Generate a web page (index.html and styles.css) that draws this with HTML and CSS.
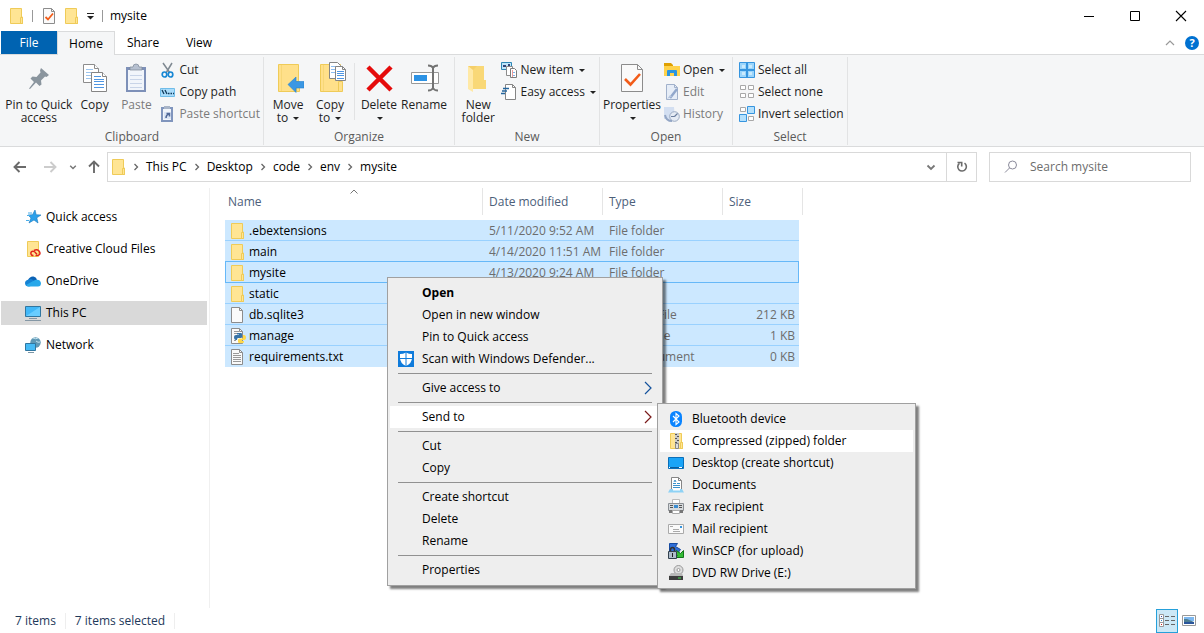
FILE: index.html
```html
<!DOCTYPE html>
<html lang="en">
<head>
  <meta charset="UTF-8">
  <title>mysite</title>
  <link rel="stylesheet" href="styles.css">
</head>
<body>

  <!-- shared icons -->
  <svg class="sprite" aria-hidden="true">
    <symbol id="folder" viewBox="0 0 16 16">
      <path d="M1.5.5h11v8.500h1v6.500h-12z" fill="#ffe594" stroke="#efcb58"/>
      <path d="M11.500 9.500h2v6h-2z" fill="#ffe594" stroke="#efcb58"/>
    </symbol>
    <symbol id="page" viewBox="0 0 16 16">
      <path d="M1.500.5h8l3 3v12h-11z" fill="#fafafa" stroke="#8c8c8c"/>
      <path d="M9.500.5v3h3" fill="none" stroke="#8c8c8c"/>
    </symbol>
    <symbol id="check-page" viewBox="0 0 16 16">
      <path d="M2.500.5h8l3 3v12h-11z" fill="#fafafa" stroke="#8c8c8c"/>
      <path d="M10.500.5v3h3" fill="none" stroke="#8c8c8c"/>
      <path d="M4.500 9l2.500 2.500 5-6" fill="none" stroke="#f25c19" stroke-width="1.800"/>
    </symbol>
    <symbol id="chev-right" viewBox="0 0 8 8">
      <path d="M2.500 1L5.500 4 2.500 7" fill="none" stroke="#666" stroke-width="1.300"/>
    </symbol>
    <symbol id="chev-down" viewBox="0 0 10 10">
      <path d="M1.500 3.500L5 7l3.500-3.500" fill="none" stroke="#777" stroke-width="1.800"/>
    </symbol>
    <symbol id="arrow" viewBox="0 0 16 16">
      <path d="M14 8H3M7.500 3L2.500 8l5 5" fill="none" stroke="currentColor" stroke-width="1.900"/>
    </symbol>
    <symbol id="submenu" viewBox="0 0 8 14">
      <path d="M1 1l6 6-6 6" fill="none" stroke="currentColor" stroke-width="1.200"/>
    </symbol>
  </svg>

  <header class="titlebar">
    <div class="quick-bar">
      <svg class="icon"><use href="#folder"/></svg>
      <span class="divider"></span>
      <button type="button" aria-label="Properties"><svg class="icon"><use href="#check-page"/></svg></button>
      <button type="button" aria-label="New folder"><svg class="icon"><use href="#folder"/></svg></button>
      <button type="button" aria-label="Customize toolbar"><svg width="8" height="8" viewBox="0 0 8 8"><path d="M0 1.500h7" stroke="#222"/><path d="M0 4h7L3.500 7.500z" fill="#222"/></svg></button>
      <span class="divider"></span>
      <h1>mysite</h1>
    </div>
    <div class="window-buttons">
      <button type="button" aria-label="Minimize"><svg width="12" height="12" viewBox="0 0 12 12"><path d="M1 6.500h10" stroke="#000"/></svg></button>
      <button type="button" aria-label="Maximize"><svg width="12" height="12" viewBox="0 0 12 12"><path d="M1.500 1.500h9v9h-9z" fill="none" stroke="#000"/></svg></button>
      <button type="button" aria-label="Close"><svg width="12" height="12" viewBox="0 0 12 12"><path d="M1 1l10 10M11 1L1 11" stroke="#000" stroke-width="1.100"/></svg></button>
    </div>
  </header>

  <nav class="tabs">
    <button type="button" class="tab file">File</button>
    <button type="button" class="tab active">Home</button>
    <button type="button" class="tab">Share</button>
    <button type="button" class="tab">View</button>
    <div class="tabs-end">
      <button type="button" aria-label="Collapse ribbon"><svg width="10" height="10" viewBox="0 0 10 10"><path d="M1 7l4-4 4 4" fill="none" stroke="#999" stroke-width="1.200"/></svg></button>
      <button type="button" class="help">?</button>
    </div>
  </nav>

  <div class="ribbon">
    <section class="group clipboard">
      <div class="tools">
        <button type="button" class="big pin">
          <svg viewBox="0 0 32 32"><path d="M18 6l8 7-2.500 2-1.500-.5-4 4 .5 4-2 1.500-3.500-3.500L7 27l-1-.5 5-6.500-3.500-3.500 2-2 4 .5 4-4.500-.500-2z" fill="#8a959e"/></svg>
          <span>Pin to Quick access</span>
        </button>
        <button type="button" class="big">
          <svg viewBox="0 0 32 32">
            <g fill="#fff" stroke="#8c8c8c"><path d="M4.500 2.500h11l4 4v14h-15z"/><path d="M15.500 2.500v4h4"/></g>
            <path d="M7 7.500h7M7 10.500h10M7 13.500h10M7 16.500h10" stroke="#9cc5ee"/>
            <g fill="#fff" stroke="#858585"><path d="M12.500 10.500h11l4 4v15h-15z"/><path d="M23.500 10.500v4h4"/></g>
            <path d="M15 14.500h7M15 17.500h10M15 19.500h10M15 22.500h10M15 25.500h10" stroke="#4f96e2"/>
          </svg>
          <span>Copy</span>
        </button>
        <button type="button" class="big paste" disabled>
          <svg viewBox="0 0 32 32">
            <path d="M6 5h20v25H6z" fill="#7d90b8"/>
            <path d="M8 8h16v20H8z" fill="#f1f5fb"/>
            <path d="M10 13.500h12M10 17.500h12M10 21.500h12M10 25.500h12" stroke="#c8d4e8"/>
            <path d="M10 8V5h3q0-3 3-3t3 3h3v3z" fill="#b6c0d0" stroke="#7b8797" stroke-width=".7"/>
          </svg>
          <span>Paste</span>
        </button>
        <div class="stack">
          <button type="button"><svg class="icon" viewBox="0 0 16 16"><path d="M3 1l7 10M12 1L6 11" stroke="#7f8992" stroke-width="1.500" fill="none"/><ellipse cx="4.500" cy="12.500" rx="2.300" ry="2.500" fill="none" stroke="#1787d4" stroke-width="1.700"/><ellipse cx="10.500" cy="12.500" rx="2.300" ry="2.500" fill="none" stroke="#1787d4" stroke-width="1.700"/></svg>Cut</button>
          <button type="button"><svg class="icon" viewBox="0 0 16 16"><path d="M.5 4.500h14v8H.5z" fill="#a9dcfb" stroke="#70bde9"/><path d="M2 6l2 4M5 6l2 4M8 9.500h1.500M10.500 9.500H12M13 9.500h1" stroke="#123b5c" stroke-width="1.300"/></svg>Copy path</button>
          <button type="button" disabled><svg class="icon" viewBox="0 0 16 16"><path d="M1 1h12v15H1z" fill="#8095bd"/><path d="M3 3h8v11H3z" fill="#f1f5fb"/><path d="M4 0h6v3H4z" fill="#a9b5c8"/><path d="M4 6h7v7H4z" fill="#dbe5f5"/><path d="M6 12c0-3 1-3.500 3-4M6.500 7.500H9.500v3" fill="none" stroke="#526a99" stroke-width="1.500"/></svg>Paste shortcut</button>
        </div>
      </div>
      <h2>Clipboard</h2>
    </section>

    <section class="group organize">
      <div class="tools">
        <button type="button" class="big">
          <svg viewBox="0 0 32 32"><path d="M6.500 2.500h20v27h-20z" fill="#ffe08a" stroke="#efcb58"/><path d="M24.500 19.500h3v10h-3z" fill="#ffe08a" stroke="#efcb58"/><path d="M9.500 3v26" stroke="#f7d777"/><path d="M16 22.500l8-7.500v4.500h8v6.500h-8v4.500z" fill="#3b97e3" stroke="#2482d0" stroke-width=".6"/></svg>
          <span>Move
to <i class="caret"></i></span>
        </button>
        <button type="button" class="big">
          <svg viewBox="0 0 32 32"><path d="M6.500 2.500h20v27h-20z" fill="#ffe08a" stroke="#efcb58"/><path d="M24.500 19.500h4v10h-4z" fill="#ffe08a" stroke="#efcb58"/><path d="M9.500 3v26" stroke="#f7d777"/>
            <path d="M15.500.5h8l3 3v13h-11z" fill="#fff" stroke="#858585"/><path d="M17 4.500h6M17 7.500h4M17 10.500h4" stroke="#8cbcf0"/>
            <path d="M21.500 4.500h7l3 3v11h-10z" fill="#fff" stroke="#858585"/><path d="M28.500 4.500v3h3" fill="none" stroke="#858585"/><path d="M23 9.500h7M23 11.500h7M23 13.500h7M23 16.500h7" stroke="#4f96e2"/></svg>
          <span>Copy
to <i class="caret"></i></span>
        </button>
        <span class="tool-divider"></span>
        <button type="button" class="big">
          <svg viewBox="0 0 32 32"><path d="M5 5l23 23M28 5L5 28" stroke="#e50b0b" stroke-width="4.500"/></svg>
          <span>Delete
<i class="caret"></i></span>
        </button>
        <button type="button" class="big rename">
          <svg viewBox="0 0 32 32"><path d="M3.500 10.500h27v11h-27z" fill="#fff" stroke="#999"/><path d="M6 13h13v6H6z" fill="#2c92e4"/><path d="M25 5v22M20 3.500q4 0 5 2.500 1-2.500 5-2.500M20 28.500q4 0 5-2.500 1 2.500 5 2.500" fill="none" stroke="#737373" stroke-width="2"/></svg>
          <span>Rename</span>
        </button>
      </div>
      <h2>Organize</h2>
    </section>

    <section class="group new">
      <div class="tools">
        <button type="button" class="big new-folder">
          <svg viewBox="0 0 32 32"><path d="M6 4h15v14h3v9H11L6 25z" fill="#f5cf69"/><path d="M6 4l5 4v22l-5-3z" fill="#ffe9a6"/><path d="M11 8l4-4h7v14h2v9H11z" fill="#f9d877"/></svg>
          <span>New folder</span>
        </button>
        <div class="stack">
          <button type="button"><svg class="icon" viewBox="0 0 16 16"><path d="M.5.5h10v7H.5z" fill="#bfe5fa" stroke="#2c86b5"/><path d="M2 3h3v2H2zM7 2h2v3H7z" fill="#347"/><path d="M5.500 4.500h6v9h-6z" fill="#fff" stroke="#8c8c8c"/><path d="M9.500 6.500h4l2 2v7h-6z" fill="#fff" stroke="#7b7b7b"/><path d="M11 10.500h3M11 13.500h3" stroke="#7cb4e8"/><path d="M11.500 8v7" stroke="#ee9c9c"/></svg>New item <i class="caret"></i></button>
          <button type="button"><svg class="icon" viewBox="0 0 16 16"><path d="M4.500.5h7l3 3v12h-10z" fill="#fff" stroke="#858585"/><path d="M11.500.5v3h3" fill="none" stroke="#858585"/><path d="M2 4.500h6M1 7h5M0 9.500h4" stroke="#24659d" stroke-width="1.300"/></svg>Easy access <i class="caret"></i></button>
        </div>
      </div>
      <h2>New</h2>
    </section>

    <section class="group open">
      <div class="tools">
        <button type="button" class="big properties">
          <svg viewBox="0 0 32 32"><path d="M5.500 2.500h16l5 5v22h-21z" fill="#fafafa" stroke="#8c8c8c"/><path d="M21.500 2.500v5h5" fill="none" stroke="#8c8c8c"/><path d="M9 17l5.500 5.500L24 12" fill="none" stroke="#f25c19" stroke-width="2.600"/></svg>
          <span>Properties
<i class="caret"></i></span>
        </button>
        <div class="stack">
          <button type="button"><svg class="icon" viewBox="0 0 16 16"><path d="M0 1h7l2 2v3H0z" fill="#dfa002"/><path d="M0 4h16v10H0z" fill="#ffd24a"/><path d="M3 14V9q0-1 1-1h8q1 0 1 1v5h-3v-3H6v3z" fill="#2b95e0"/></svg>Open <i class="caret"></i></button>
          <button type="button" disabled><svg class="icon" viewBox="0 0 16 16"><path d="M2.500.5h8l3 3v12h-11z" fill="#e6edf7" stroke="#a1b1cb"/><path d="M10.500.5v3h3" fill="none" stroke="#a1b1cb"/><path d="M13 5L6 14" stroke="#91a7cb" stroke-width="2.500"/><path d="M3 15l3-4 2 1.500z" fill="#b8c7df"/></svg>Edit</button>
          <button type="button" disabled><svg class="icon" viewBox="0 0 16 16"><path d="M0 1h10l1 12H0z" fill="#d3dff1"/><circle cx="10.500" cy="10.500" r="4.800" fill="#e5ebf4" stroke="#9baac2"/><path d="M10.500 10.500l3-3M10.500 10.500H7" stroke="#6b7e9e" stroke-width="1.200"/><path d="M1 9q1 6 7 6" fill="none" stroke="#93a6c5" stroke-width="2"/></svg>History</button>
        </div>
      </div>
      <h2>Open</h2>
    </section>

    <section class="group select">
      <div class="tools">
        <div class="stack">
          <button type="button"><svg class="icon" viewBox="0 0 16 16"><path d="M.5.5h15v15H.5z" fill="#9bd5fb" stroke="#3695df"/><path d="M8 0v16M0 8h16" stroke="#3695df" stroke-width="2"/><path d="M3 3h3v3H3zM10 3h3v3h-3zM3 10h3v3H3zM10 10h3v3h-3z" fill="#c9eafd"/></svg>Select all</button>
          <button type="button"><svg class="icon" viewBox="0 0 16 16"><path d="M1.500 1.500h5v4h-5zM9.500 1.500h5v4h-5zM1.500 9.500h5v4h-5zM9.500 9.500h5v4h-5z" fill="#fff" stroke="#a8a8a8"/></svg>Select none</button>
          <button type="button"><svg class="icon" viewBox="0 0 16 16"><path d="M1.500 1.500h5v4h-5zM9.500 10.500h5v4h-5z" fill="#fff" stroke="#a8a8a8"/><path d="M8.500.5h7v7h-7zM.5 8.500h7v7h-7z" fill="#b4e0fc" stroke="#3695df"/></svg>Invert selection</button>
        </div>
      </div>
      <h2>Select</h2>
    </section>
  </div>

  <div class="location">
    <div class="history">
      <button type="button" aria-label="Back"><svg class="icon"><use href="#arrow"/></svg></button>
      <button type="button" class="off" aria-label="Forward" disabled><svg class="icon flip"><use href="#arrow"/></svg></button>
      <button type="button" class="recent" aria-label="Recent locations"><svg width="8" height="8"><use href="#chev-down"/></svg></button>
      <button type="button" class="up" aria-label="Up"><svg class="icon turn"><use href="#arrow"/></svg></button>
    </div>
    <div class="address">
      <svg class="icon"><use href="#folder"/></svg>
      <nav class="crumbs">
        <svg><use href="#chev-right"/></svg>
        <a href="#">This PC</a>
        <svg><use href="#chev-right"/></svg>
        <a href="#">Desktop</a>
        <svg><use href="#chev-right"/></svg>
        <a href="#">code</a>
        <svg><use href="#chev-right"/></svg>
        <a href="#">env</a>
        <svg><use href="#chev-right"/></svg>
        <a href="#">mysite</a>
      </nav>
      <button type="button" aria-label="Previous locations"><svg width="10" height="10"><use href="#chev-down"/></svg></button>
      <button type="button" class="refresh" aria-label="Refresh"><svg width="12" height="12" viewBox="0 0 12 12"><path d="M8.500 2.200a4.300 4.300 0 1 1-5 .1" fill="none" stroke="#6b6b6b" stroke-width="1.600"/><path d="M1.500 1.500h4.200v4" fill="none" stroke="#6b6b6b" stroke-width="1.600"/></svg></button>
    </div>
    <div class="search">
      <svg width="14" height="14" viewBox="0 0 14 14"><circle cx="8.500" cy="5" r="4" fill="none" stroke="#8a8a9a"/><path d="M5.500 8L1 12.500" stroke="#8a8a9a"/></svg>
      <input type="text" placeholder="Search mysite" aria-label="Search mysite">
    </div>
  </div>

  <main>
    <nav class="sidebar">
      <a href="#"><svg class="icon" viewBox="0 0 16 16"><path d="M10 1l1.200 4.700 4.800.3-4.200 2.800 1.200 5.200-4-3-5 3 2-5-3-3 4.500-.3z" fill="#2ba0ea" stroke="#1778be" stroke-width=".6"/><path d="M3 4h4M2 6.500h3M1 11.500h3" stroke="#4aaee9"/></svg>Quick access</a>
      <a href="#"><svg class="icon" viewBox="0 0 16 16"><path d="M2.500.5h11v15h-11z" fill="#ffe594" stroke="#efcb58"/><path d="M8.500 14.500h-.500a2 2 0 0 1 0-4.300q1.500 0 2.500 1.500l1.500 1.500M9 9.500q3-1.500 5 .5 2 2.500 0 4-1 .8-3.500.5" fill="none" stroke="#e1251b" stroke-width="1.500"/></svg>Creative Cloud Files</a>
      <a href="#"><svg class="icon" viewBox="0 0 16 16"><path d="M3 7q2-4 5.500-3.500Q11 4 12 6.500l-6 4z" fill="#0b62b5"/><path d="M4 6.500q2-1 4 .5l5 4-9 2.500q-4 0-4-3.500 0-3 4-3.500z" fill="#1582d4"/><path d="M1 12l9-5q5-1.500 6 3 0 3.500-3 3.500H4Q2 13.500 1 12z" fill="#28a8ea"/></svg>OneDrive</a>
      <a href="#" class="current"><svg class="icon" viewBox="0 0 16 16"><path d="M.5 1.500h15v10H.5z" fill="#42b8f8" stroke="#31769f"/><path d="M1 11L15 2v9z" fill="#69cdff"/><path d="M4 13.500h8M0 15.500h16" stroke="#8497a5"/></svg>This PC</a>
      <a href="#"><svg class="icon" viewBox="0 0 16 16"><circle cx="10.500" cy="5.500" r="5.200" fill="#5f98b5"/><path d="M8 1q3 1.500 5 0M11 4q2 2 4 1" fill="none" stroke="#c4e2ef"/><path d="M.5 6.500h10v7H.5z" fill="#45baf5" stroke="#2f76a0"/><path d="M3 15.500h6" stroke="#7b96a6"/></svg>Network</a>
    </nav>

    <div class="files">
      <table>
        <colgroup>
          <col class="col-name">
          <col class="col-date">
          <col class="col-type">
          <col class="col-size">
          <col class="col-end">
        </colgroup>
        <thead>
          <tr>
            <th class="sorted">Name<svg width="8" height="5" viewBox="0 0 8 5"><path d="M.5 4.500L4 1l3.500 3.500" fill="none" stroke="#777"/></svg></th>
            <th>Date modified</th>
            <th>Type</th>
            <th colspan="2">Size</th>
          </tr>
        </thead>
        <tbody>
          <tr><td><svg class="icon"><use href="#folder"/></svg>.ebextensions</td><td>5/11/2020 9:52 AM</td><td>File folder</td><td></td></tr>
          <tr><td><svg class="icon"><use href="#folder"/></svg>main</td><td>4/14/2020 11:51 AM</td><td>File folder</td><td></td></tr>
          <tr class="focused"><td><svg class="icon"><use href="#folder"/></svg>mysite</td><td>4/13/2020 9:24 AM</td><td>File folder</td><td></td></tr>
          <tr><td><svg class="icon"><use href="#folder"/></svg>static</td><td></td><td></td><td></td></tr>
          <tr><td><svg class="icon"><use href="#page"/></svg>db.sqlite3</td><td></td><td>SQLITE3 File</td><td>212 KB</td></tr>
          <tr><td><svg class="icon" viewBox="0 0 16 16"><use href="#page"/><path d="M4 3.500h5M4 5.500h3M4 12.500h2" stroke="#999"/><path d="M7 5h4q1 0 1 1v3q0 1-1 1H8q-1 0-1 2H6q-2 0-2-3 0-2 2-2h3V6.500H7z" fill="#3874a8"/><path d="M13 7h1q2 0 2 3 0 2-2 2h-2v1h2v1.500q-3 1.500-6 0V12q0-1.500 1.500-1.500H12q1 0 1-1z" fill="#ffd94a"/></svg>manage</td><td></td><td>Python File</td><td>1 KB</td></tr>
          <tr><td><svg class="icon" viewBox="0 0 16 16"><use href="#page"/><path d="M3 4.500h6M3 6.500h8M3 8.500h8M3 10.500h8M3 12.500h8" stroke="#999"/></svg>requirements.txt</td><td></td><td>Text Document</td><td>0 KB</td></tr>
        </tbody>
      </table>
    </div>
  </main>

  <footer class="status">
    <span>7 items</span>
    <span>7 items selected</span>
    <div class="views">
      <button type="button" class="on" aria-label="Details"><svg width="16" height="14" viewBox="0 0 16 14"><path d="M.5.5h4v12h-4zM.5 4.500h4M.5 8.500h4" fill="#fff" stroke="#999"/><path d="M2 2h1v1H2z" fill="#34a"/><path d="M2 6h1v1H2z" fill="#38c"/><path d="M2 10h1v1H2z" fill="#c22"/><path d="M6 2.500h4M12 2.500h4M6 6.500h4M12 6.500h4M6 10.500h4M12 10.500h4" stroke="#666"/></svg></button>
      <button type="button" aria-label="Large icons"><svg width="14" height="11" viewBox="0 0 14 11"><path d="M.5.5h13v10H.5z" fill="#fff" stroke="#999"/><path d="M2 2h10v4H2z" fill="#7db8f0"/><path d="M2 4l3 0 7 3v1H2z" fill="#4d7d92"/><path d="M2 7h10v2H2z" fill="#2a559b"/></svg></button>
    </div>
  </footer>

  <ul class="menu context">
    <li><button type="button"><i class="slot"></i><b>Open</b></button></li>
    <li><button type="button"><i class="slot"></i>Open in new window</button></li>
    <li><button type="button"><i class="slot"></i>Pin to Quick access</button></li>
    <li><button type="button"><svg class="icon" viewBox="0 0 16 16"><path d="M0 0h16v16H0z" fill="#0f7bdb"/><path d="M8 1.500q3 1.500 6 1.500v4q0 5-6 8-6-3-6-8V3q3 0 6-1.500z" fill="#fff"/><path d="M8 1v14M2 7.500h12" stroke="#0f7bdb"/></svg>Scan with Windows Defender...</button></li>
    <li class="line"></li>
    <li><button type="button"><i class="slot"></i>Give access to<svg class="more"><use href="#submenu"/></svg></button></li>
    <li class="line"></li>
    <li class="opened">
      <button type="button"><i class="slot"></i>Send to<svg class="more"><use href="#submenu"/></svg></button>
      <ul class="menu submenu">
        <li><button type="button"><svg class="icon" viewBox="0 0 16 16"><rect x="2" width="12" height="16" rx="5.500" fill="#0a84ff"/><path d="M5 5l6 6-3 2.500v-11L11 5l-6 6" fill="none" stroke="#fff" stroke-width="1.100"/></svg>Bluetooth device</button></li>
        <li class="hover"><button type="button"><svg class="icon" viewBox="0 0 16 16"><path d="M2.500.5h11v9h1v6h-12z" fill="#ffe594" stroke="#efcb58"/><path d="M12.500 9.500h2v6h-2z" fill="#ffe594" stroke="#efcb58"/><path d="M7 0h4v13H7z" fill="#c9c9c9"/><path d="M7 1.500h2M9 3.500h2M7 5.500h2M9 7.500h2M7 9.500h2" stroke="#555"/><path d="M7.500 10.500h3v5h-3z" fill="#ddd" stroke="#888"/></svg>Compressed (zipped) folder</button></li>
        <li><button type="button"><svg class="icon" viewBox="0 0 16 16"><path d="M.5 2.500h15v11H.5z" fill="#1aa4f7" stroke="#0b6fb9"/><path d="M1 12.500h14" stroke="#0b5d9c"/><path d="M1 12.500h1M11 12.500h3" stroke="#fff"/></svg>Desktop (create shortcut)</button></li>
        <li><button type="button"><svg class="icon" viewBox="0 0 16 16"><path d="M3.500.5h7l3 3v10h-10z" fill="#fff" stroke="#858585"/><path d="M10.500.5v3h3" fill="none" stroke="#858585"/><path d="M5 6.500h3M9 6.500h3M5 8.500h7M5 10.500h7M6 5l1-2 1 2" fill="none" stroke="#3b93cd"/><path d="M2 12h12l2 3.500H0z" fill="#8ed2f5"/><path d="M5 12h7v1.500H5z" fill="#fff"/></svg>Documents</button></li>
        <li><button type="button"><svg class="icon" viewBox="0 0 16 16"><path d="M4.500.5h7v5h-7z" fill="#fff" stroke="#bbb"/><path d="M.5 4.500h15v7H.5z" fill="#d6dadd" stroke="#8a8f94"/><path d="M2 6h3v1H2zM2 8h3v1H2z" fill="#555"/><path d="M6 6h4v3H6z" fill="#3b8cd0"/><path d="M11 6h3v1h-3zM11 8h3v1h-3z" fill="#555"/><path d="M1 11h14v3H1z" fill="#777"/><path d="M4.500 11.500h7v3h-7z" fill="#fff" stroke="#aaa"/></svg>Fax recipient</button></li>
        <li><button type="button"><svg class="icon" viewBox="0 0 16 16"><path d="M.5 3.500h15v9H.5z" fill="#fafafa" stroke="#aaa"/><path d="M2 5.500h3M5 8.500h6M5 10.500h7" stroke="#aaa"/><path d="M12 5h2v2h-2z" fill="#3695df"/></svg>Mail recipient</button></li>
        <li><button type="button"><svg class="icon" viewBox="0 0 16 16"><path d="M1.500.5h8l-2 3 5 3-3 4h-8z" fill="#2f6ed8" stroke="#164aa0"/><path d="M15.500 7.500v7h-8l2-2-3-3 2-2 4 3z" fill="#34bc34" stroke="#13731a"/><path d="M2.500 9V7q0-2.500 2-2.500t2 2.500v2" fill="none" stroke="#333" stroke-width="1.500"/><path d="M.5 8.500h8v7h-8z" fill="#aebccb" stroke="#34424f"/><path d="M4 10h1v4H4z" fill="#222"/></svg>WinSCP (for upload)</button></li>
        <li><button type="button"><svg class="icon" viewBox="0 0 16 16"><circle cx="10.500" cy="5" r="4.500" fill="#ddd" stroke="#999"/><circle cx="10.500" cy="5" r="1.500" fill="#fff" stroke="#999"/><path d="M3 8h11l1 3H1z" fill="#b8b8b8"/><path d="M1 11h14v4H1z" fill="#3d3d3d"/><path d="M10 13h3" stroke="#3edc4a"/></svg>DVD RW Drive (E:)</button></li>
      </ul>
    </li>
    <li class="line"></li>
    <li><button type="button"><i class="slot"></i>Cut</button></li>
    <li><button type="button"><i class="slot"></i>Copy</button></li>
    <li class="line"></li>
    <li><button type="button"><i class="slot"></i>Create shortcut</button></li>
    <li><button type="button"><i class="slot"></i>Delete</button></li>
    <li><button type="button"><i class="slot"></i>Rename</button></li>
    <li class="line"></li>
    <li><button type="button"><i class="slot"></i>Properties</button></li>
  </ul>

</body>
</html>
```
FILE: styles.css
```css
* {
  box-sizing: border-box;
}

body {
  display: flex;
  flex-direction: column;
  position: relative;
  min-height: 100vh;
  margin: 0;
  background-color: #fff;
  color: #000;
  font-family: "Open Sans", "Noto Sans", sans-serif;
  font-size: 12px;
  line-height: 16px;
}

button {
  padding: 0;
  border: 0;
  background: none;
  color: inherit;
  font: inherit;
}

a {
  color: inherit;
  text-decoration: none;
}

svg {
  display: block;
  flex: none;
}

h1, h2 {
  margin: 0;
  font-size: 12px;
  font-weight: normal;
}

.sprite {
  position: absolute;
  width: 0;
  height: 0;
}

.icon {
  width: 16px;
  height: 16px;
}

.caret {
  display: inline-block;
  margin-left: 2px;
  border: 3px solid transparent;
  border-top-color: #222;
  border-bottom: 0;
  vertical-align: middle;
}

/* title bar */
.titlebar {
  display: flex;
  justify-content: space-between;
  height: 31px;
}

.quick-bar {
  display: flex;
  align-items: center;
  gap: 7px;
  padding-left: 9px;
}

.divider {
  width: 1px;
  height: 12px;
  background-color: #999;
}

.quick-bar .divider:nth-child(2) {
  margin-right: 1px;
}

.window-buttons {
  display: flex;
}

.window-buttons button {
  display: grid;
  place-items: center;
  width: 46px;
}

/* ribbon tabs */
.tabs {
  display: flex;
  height: 24px;
  padding-left: 1px;
  border-bottom: 1px solid #dadbdc;
}

.tab {
  width: 56px;
}

.tab.file {
  background-color: #0063b1;
  color: #fff;
}

.tab.active {
  width: 58px;
  height: 24px;
  border: 1px solid #dadbdc;
  border-bottom: 0;
  background-color: #f5f6f7;
}

.tabs-end {
  display: flex;
  align-items: center;
  gap: 10px;
  margin-left: auto;
  padding-right: 5px;
}

.help {
  width: 14px;
  height: 14px;
  border-radius: 50%;
  background-color: #0071d1;
  color: #fff;
  font-size: 11px;
  font-weight: bold;
  line-height: 14px;
}

/* ribbon */
.ribbon {
  display: flex;
  height: 92px;
  padding-left: 1px;
  border-bottom: 1px solid #dadbdc;
  background-color: #f5f6f7;
  color: #1e1e1e;
}

.group {
  display: flex;
  flex-direction: column;
  justify-content: space-between;
  margin: 2px 0 1px;
  padding: 2px 3px 0;
  border-right: 1px solid #e2e3e4;
}

.group h2 {
  color: #5a5a5a;
  text-align: center;
}

.clipboard {
  width: 263px;
}

.organize {
  width: 191px;
}

.new {
  width: 145px;
}

.open {
  width: 133px;
}

.select {
  width: 115px;
}

.tools {
  display: flex;
}

.big {
  display: flex;
  flex-direction: column;
  align-items: center;
  gap: 4px;
  width: 42px;
  padding-top: 3px;
  line-height: 13px;
}

.big svg {
  width: 32px;
  height: 32px;
}

.big span {
  white-space: pre-line;
}

.big.pin {
  width: 70px;
}

.big.rename {
  width: 48px;
}

.big.new-folder {
  width: 44px;
}

.big.properties {
  width: 58px;
}

.tool-divider {
  width: 1px;
  margin: 4px 3px;
  background-color: #e2e3e4;
}

.stack {
  display: flex;
  flex-direction: column;
  padding-left: 3px;
}

.stack button {
  display: flex;
  align-items: center;
  gap: 3px;
  height: 22px;
  white-space: nowrap;
}

button:disabled {
  color: #7b7b7b;
}

/* address and search */
.location {
  display: flex;
  gap: 12px;
  padding: 5px 13px 5px 12px;
}

.history {
  display: flex;
  align-items: center;
  gap: 14px;
  margin-right: -7px;
  color: #6b6b6b;
}

.history .off {
  color: #ccc;
}

.history .recent {
  margin: 0 -5px 0 -3px;
}

.flip {
  transform: scaleX(-1);
}

.turn {
  transform: rotate(90deg);
}

.address {
  display: flex;
  flex: 1;
  align-items: center;
  height: 30px;
  padding-left: 3px;
  border: 1px solid #d9d9d9;
}

.crumbs {
  display: flex;
  flex: 1;
  align-items: center;
  gap: 6px;
  padding-left: 5px;
}

.crumbs svg {
  width: 8px;
  height: 8px;
}

.address button {
  display: grid;
  place-items: center;
  width: 30px;
  height: 28px;
}

.address .refresh {
  border-left: 1px solid #d9d9d9;
}

.search {
  display: flex;
  align-items: center;
  gap: 12px;
  width: 202px;
  padding-left: 14px;
  border: 1px solid #d9d9d9;
}

.search input {
  width: 100%;
  padding: 0;
  border: 0;
  outline: 0;
  font: inherit;
}

.search input::placeholder {
  color: #6d6d6d;
}

/* content */
main {
  display: flex;
  flex: 1;
  padding-top: 1px;
}

.sidebar {
  display: flex;
  flex-direction: column;
  gap: 8px;
  width: 210px;
  padding: 17px 2px 0 1px;
  border-right: 1px solid #f0f0f0;
}

.sidebar a {
  display: flex;
  align-items: center;
  gap: 5px;
  height: 24px;
  padding-left: 24px;
}

.sidebar .current {
  background-color: #d9d9d9;
}

.files {
  flex: 1;
  padding-left: 15px;
}

table {
  width: 578px;
  border-collapse: separate;
  border-spacing: 0;
  table-layout: fixed;
}

.col-name {
  width: 258px;
}

.col-date, .col-type {
  width: 120px;
}

.col-size {
  width: 76px;
}

.col-end {
  width: 4px;
}

th {
  position: relative;
  height: 27px;
  padding: 0 6px;
  border-right: 1px solid #e5e5e5;
  color: #4c607a;
  font-weight: normal;
  text-align: left;
}

th:first-child {
  padding-left: 3px;
}

.sorted svg {
  position: absolute;
  top: 1px;
  left: 50%;
  transform: translateX(-50%);
}

tbody::before {
  content: "";
  display: block;
  height: 5px;
}

td {
  height: 21px;
  padding: 2px 0 0 6px;
  border-bottom: 1px solid #99d1ff;
  background-color: #cce8ff;
  color: #6d6d6d;
  white-space: nowrap;
}

td:first-child {
  display: flex;
  align-items: center;
  gap: 3px;
  padding-left: 5px;
  color: #000;
}

td:last-child {
  padding-right: 4px;
  text-align: right;
}

tbody tr:last-child td {
  border-bottom-color: #cce8ff;
}

.focused td {
  border-bottom-color: #66b8f8;
  box-shadow: 0 -1px #66b8f8;
}

.focused td:first-child {
  border-left: 1px solid #66b8f8;
  padding-left: 4px;
}

.focused td:last-child {
  border-right: 1px solid #66b8f8;
}

/* status bar */
.status {
  display: flex;
  align-items: center;
  height: 25px;
  padding: 0 8px 0 15px;
  color: #1e395b;
}

.status span {
  margin-right: 9px;
  padding-right: 9px;
  border-right: 1px solid #eee;
}

.views {
  display: flex;
  align-items: center;
  gap: 4px;
  margin-left: auto;
}

.views .on {
  padding: 4px 2px;
  border: 1px solid #26a0da;
  background-color: #cce8f6;
}

/* context menus */
.menu {
  position: absolute;
  margin: 0;
  padding: 4px 2px;
  border: 1px solid #a0a0a0;
  background-color: #eee;
  box-shadow: 3px 3px 2px rgba(0, 0, 0, 0.5);
  list-style: none;
}

.context {
  top: 277px;
  left: 387px;
  width: 276px;
}

.submenu {
  top: -3px;
  left: 267px;
  width: 259px;
}

.menu li {
  position: relative;
}

.menu button {
  display: flex;
  align-items: center;
  gap: 8px;
  width: 100%;
  height: 22px;
  padding: 0 8px;
}

.menu .slot {
  width: 16px;
}

.menu .line {
  height: 1px;
  margin: 3px 8px;
  background-color: #919191;
}

.more {
  width: 8px;
  height: 14px;
  margin-left: auto;
  color: #14529c;
}

.opened > button, .hover > button, .menu button:hover {
  background-color: #fff;
}

.opened .more {
  color: #7a1a1a;
}
```
